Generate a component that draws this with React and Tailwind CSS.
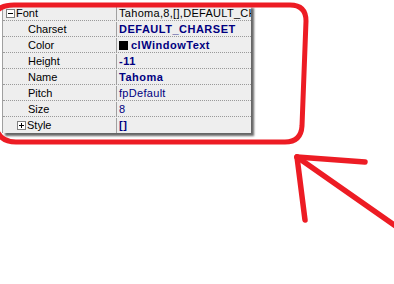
const rows = [
  { label: 'Font', value: 'Tahoma,8,[],DEFAULT_CHARSET', box: 'minus', cls: 'text-black tracking-[0.3px]' },
  { label: 'Charset', value: 'DEFAULT_CHARSET', cls: 'font-bold text-[#000080] tracking-[0.5px]' },
  { label: 'Color', value: 'clWindowText', swatch: true, cls: 'font-bold text-[#000080] tracking-[0.5px]' },
  { label: 'Height', value: '-11', cls: 'font-bold text-[#000080] tracking-[0.5px]' },
  { label: 'Name', value: 'Tahoma', cls: 'font-bold text-[#000080] tracking-[0.5px]' },
  { label: 'Pitch', value: 'fpDefault', cls: 'text-[#000080] tracking-[0.3px]' },
  { label: 'Size', value: '8', cls: 'text-[#000080]' },
  { label: 'Style', value: '[]', box: 'plus', cls: 'font-bold text-[#000080] tracking-[0.5px]' },
];

function TreeBox({ kind }) {
  return (
    <span className="relative inline-block w-[9px] h-[9px] border border-[#808080] bg-white mr-[1px] shrink-0">
      <span className="absolute left-[1px] top-[3px] w-[5px] h-[1px] bg-black" />
      {kind === 'plus' && <span className="absolute left-[3px] top-[1px] w-[1px] h-[5px] bg-black" />}
    </span>
  );
}

export default function App() {
  return (
    <div className="relative w-[394px] h-[284px] bg-white overflow-hidden" style={{ fontFamily: '"Liberation Sans", Arial, sans-serif' }}>
      <div className="ml-[2px] mt-[5px] w-[249px] bg-[#eeeeee] border-l border-[#a0a0a0] shadow-[3px_3px_2px_rgba(0,0,0,0.6)] text-[11px] leading-[15px]">
        {rows.map((r, i) => (
          <div key={r.label} className={`flex h-[16px] pt-[1px] ${i < rows.length - 1 ? 'border-b border-dotted border-[#9a9a9a]' : ''}`}>
            <div className={`w-[114px] flex items-center border-r border-[#a0a0a0] text-black ${r.box === 'minus' ? 'pl-[3px]' : r.box === 'plus' ? 'pl-[14px]' : 'pl-[25px]'}`}>
              {r.box && <TreeBox kind={r.box} />}
              <span>{r.label}</span>
            </div>
            <div className={`flex-1 flex items-center pl-[2px] overflow-hidden whitespace-nowrap ${r.cls}`}>
              {r.swatch && <span className="inline-block w-[9px] h-[9px] bg-black mr-[3px] shrink-0" />}
              {r.value}
            </div>
          </div>
        ))}
      </div>
      <svg className="absolute inset-0" width="394" height="284" viewBox="0 0 394 284" fill="none" stroke="#ed1c24" strokeWidth="5" strokeLinecap="round" strokeLinejoin="round">
        <path d="M14 5 L290 5 Q306 5 306 21 L302 126 Q301 142 285 142 L16 142 Q0 142 -4 128 L-7 20 Q-5 5 14 5 Z" />
        <path d="M297 157 L365 162" strokeWidth="5.5" />
        <path d="M297 157 L305 220" strokeWidth="5.5" />
        <path d="M297 157 L400 229" strokeWidth="5.5" />
      </svg>
    </div>
  );
}
